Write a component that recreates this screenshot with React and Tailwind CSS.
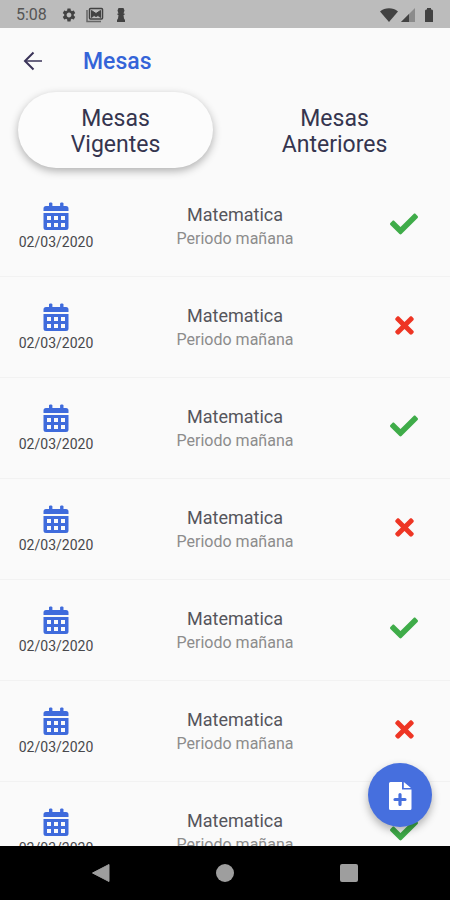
import { useState } from 'react';
import { FaCheck, FaTimes } from 'react-icons/fa';
import { MdSettings } from 'react-icons/md';

const TABS = [
  { id: 'vigentes', label: 'Mesas Vigentes' },
  { id: 'anteriores', label: 'Mesas Anteriores' },
];

const MESAS = [true, false, true, false, true, false, true].map((inscripto, id) => ({
  id,
  fecha: '02/03/2020',
  materia: 'Matematica',
  periodo: 'Periodo mañana',
  inscripto,
}));

const CalendarIcon = () => (
  <svg className="w-7 h-7 text-[#3f6bdc]" viewBox="0 0 28 28" fill="currentColor">
    <path d="M7 1.200c0-1 3.400-1 3.400 0V4h7.700V1.200c0-1 3.400-1 3.400 0V4H24a2.500 2.500 0 0 1 2.500 2.500V9h-25V6.500A2.500 2.500 0 0 1 4 4h3z" />
    <path
      fillRule="evenodd"
      d="M1.500 11h25v14.500A2.500 2.500 0 0 1 24 28H4a2.500 2.500 0 0 1-2.500-2.500zM5 14v4h4v-4zm7 0v4h4v-4zm7 0v4h4v-4zM5 21v4h4v-4zm7 0v4h4v-4zm7 0v4h4v-4z"
    />
  </svg>
);

const AddFileIcon = () => (
  <svg className="w-7 h-7" viewBox="0 0 28 28">
    <path
      fill="currentColor"
      d="M4.500 0H16v7.500h9.500v19A1.500 1.500 0 0 1 24 28H4.500A1.500 1.500 0 0 1 3 26.500v-25A1.500 1.500 0 0 1 4.500 0zM17.800 0L25 6H17.800z"
    />
    <path d="M14 12.500v10M9 17.500h10" stroke="#466fde" strokeWidth="3.200" strokeLinecap="round" />
  </svg>
);

const StatusBar = () => (
  <div className="h-7 shrink-0 bg-[#bcbcbc] text-[#424242] flex items-center justify-between px-4 pt-px">
    <div className="flex items-center">
      <span className="text-base text-[#555555]">5:08</span>
      <MdSettings className="ml-3.5 w-4 h-4" />
      {/* Gallery notification */}
      <svg className="ml-2 w-5 h-4" viewBox="0 0 20 16" fill="none" stroke="currentColor">
        <path d="M2 3v11.500h14" strokeWidth="1.500" opacity="0.7" />
        <rect x="4.500" y="1.500" width="13" height="10.500" rx="1" strokeWidth="1.500" />
        <path d="M6.500 10.500V3.500l4.500 3 4.500-3v7l-2.500-2-2 1-2-1z" fill="currentColor" />
      </svg>
      <svg className="ml-2 w-4 h-4" viewBox="0 0 16 16" fill="currentColor">
        <path d="M5.500 1h5l1 2.500-1 3h1v1.500h-1l.5 3.500 1 1.500v2H4v-2l1-1.500L5.500 8h-1V6.500h1l-1-3z" />
      </svg>
    </div>
    <div className="flex items-center">
      <svg className="w-[18px] h-4" viewBox="0 0 18 16" fill="currentColor">
        <path d="M0 4.500C5 .2 13 .2 18 4.500L9 15z" />
      </svg>
      <svg className="ml-0.5 w-4 h-4" viewBox="0 0 16 16" fill="currentColor">
        <path d="M15 1v14H1z" opacity="0.4" />
        <path d="M9 7v8H1z" />
      </svg>
      <svg className="ml-2 w-2.5 h-4" viewBox="0 0 10 16" fill="currentColor">
        <path d="M3 1h4v1.500h1l1 1V15H1V3.500l1-1h1z" />
      </svg>
    </div>
  </div>
);

const MesaRow = ({ mesa }) => (
  <li className="h-[101px] shrink-0 flex items-center border-b border-[#f2f2f2]">
    <div className="w-28 flex flex-col items-center">
      <CalendarIcon />
      <span className="mt-1 text-sm leading-4 text-[#48484c]">{mesa.fecha}</span>
    </div>
    <div className="flex-1 text-center pt-0.5">
      <p className="text-lg leading-6 text-[#55555c]">{mesa.materia}</p>
      <p className="text-base leading-6 text-[#8c8c8c]">{mesa.periodo}</p>
    </div>
    <div className="w-[92px] flex justify-center pb-1">
      {mesa.inscripto ? (
        <FaCheck className="w-7 h-7 text-[#3fac49]" />
      ) : (
        <FaTimes className="w-[27px] h-[27px] text-[#ee3524]" />
      )}
    </div>
  </li>
);

const NavigationBar = () => (
  <nav className="h-[54px] shrink-0 bg-black text-[#9e9e9e] flex items-center justify-center gap-[100px]">
    <button type="button" aria-label="Atrás">
      <svg className="w-6 h-6" viewBox="0 0 24 24" fill="currentColor">
        <path d="M20 3.500v17L3.500 12z" stroke="currentColor" strokeLinejoin="round" />
      </svg>
    </button>
    <button type="button" aria-label="Inicio">
      <svg className="w-6 h-6" viewBox="0 0 24 24" fill="currentColor">
        <circle cx="12" cy="12" r="9" />
      </svg>
    </button>
    <button type="button" aria-label="Recientes">
      <svg className="w-6 h-6" viewBox="0 0 24 24" fill="currentColor">
        <rect x="3" y="3" width="18" height="18" rx="2" />
      </svg>
    </button>
  </nav>
);

const App = () => {
  const [activeTab, setActiveTab] = useState('vigentes');

  return (
    <div className="h-screen flex flex-col bg-[#fafafa] font-['Roboto',sans-serif]">
      <StatusBar />

      <main className="relative flex-1 min-h-0 flex flex-col">
        {/* Header */}
        <header className="h-16 shrink-0 flex items-center pl-5 pt-0.5">
          <button type="button" aria-label="Volver" className="text-[#3a3358]">
            <svg
              className="w-[27px] h-[27px]"
              viewBox="0 0 27 27"
              fill="none"
              stroke="currentColor"
              strokeWidth="2"
            >
              <path d="M13.500 4.500L5 13l8.500 8.500" />
              <path d="M5 13h17" opacity="0.75" />
            </svg>
          </button>
          <h1 className="ml-9 pt-0.5 text-[23px] font-medium text-[#3464d8]">Mesas</h1>
        </header>

        {/* Tabs */}
        <div className="shrink-0 flex gap-6 px-[18px] pb-2">
          {TABS.map((tab) => (
            <button
              key={tab.id}
              type="button"
              onClick={() => setActiveTab(tab.id)}
              className={`flex-1 h-[76px] px-10 pt-1 rounded-full text-[23px] leading-[26px] text-[#35354f] ${
                activeTab === tab.id ? 'bg-[#fcfcfc] shadow-[0_3px_8px_rgba(0,0,0,0.3)]' : ''
              }`}
            >
              {tab.label}
            </button>
          ))}
        </div>

        {/* Exam list */}
        <ul className="flex-1 min-h-0 flex flex-col overflow-hidden">
          {MESAS.map((mesa) => (
            <MesaRow key={mesa.id} mesa={mesa} />
          ))}
        </ul>

        <button
          type="button"
          aria-label="Agregar mesa"
          className="absolute right-[18px] bottom-[19px] w-16 h-16 rounded-full bg-[#466fde] text-white flex items-center justify-center pt-0.5 shadow-[0_4px_8px_rgba(0,0,0,0.3)]"
        >
          <AddFileIcon />
        </button>
      </main>

      <NavigationBar />
    </div>
  );
};

export default App;
